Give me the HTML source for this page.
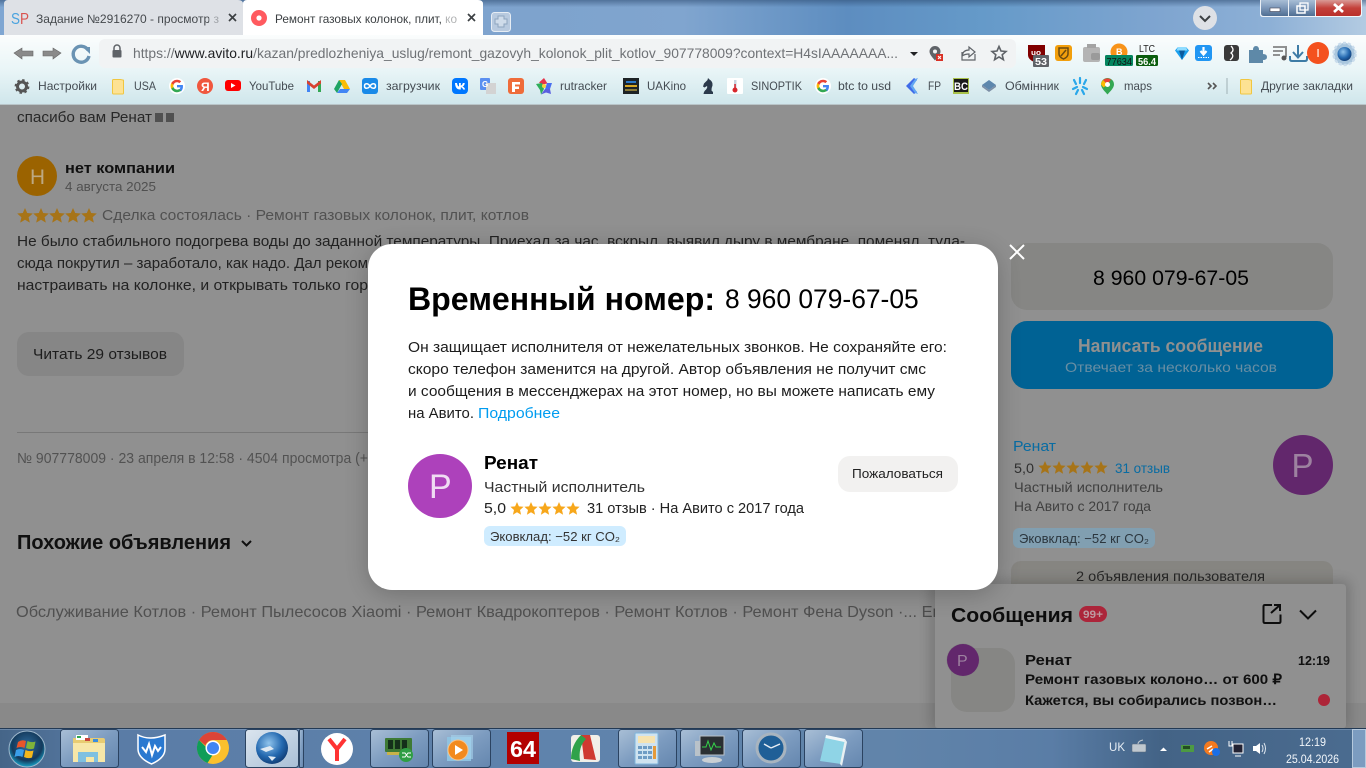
<!DOCTYPE html>
<html lang="ru"><head><meta charset="utf-8"><title>Ремонт газовых колонок</title>
<style>
html,body{margin:0;padding:0;width:1366px;height:768px;overflow:hidden;background:#999}
svg{display:block;position:absolute;left:0;top:0}
text{font-family:"Liberation Sans","Noto Sans CJK SC",sans-serif;white-space:pre}
.b{font-weight:700}
</style></head><body>
<svg width="1366" height="768" viewBox="0 0 1366 768" xmlns="http://www.w3.org/2000/svg">
<defs>
<linearGradient id="tb" x1="0" x2="1" y1="0" y2="0"><stop offset="0" stop-color="#7fa6d2"/><stop offset=".4" stop-color="#7ea3cd"/><stop offset=".5" stop-color="#80a5cf"/><stop offset=".62" stop-color="#5d8dc0"/><stop offset=".72" stop-color="#659ac9"/><stop offset=".85" stop-color="#7fa5d0"/><stop offset=".93" stop-color="#8db0d6"/><stop offset="1" stop-color="#b3cbe2"/></linearGradient>
<linearGradient id="tbv" x1="0" x2="0" y1="0" y2="1"><stop offset="0" stop-color="#2c4a70" stop-opacity=".55"/><stop offset=".2" stop-color="#2c4a70" stop-opacity="0"/></linearGradient>
<linearGradient id="tool" x1="0" x2="0" y1="0" y2="1"><stop offset="0" stop-color="#fbfdfd"/><stop offset=".5" stop-color="#e9f5f7"/><stop offset="1" stop-color="#cfe6eb"/></linearGradient>
<linearGradient id="task" x1="0" x2="1" y1="0" y2="0"><stop offset="0" stop-color="#456588"/><stop offset=".08" stop-color="#5a7ca6"/><stop offset=".4" stop-color="#5f83ac"/><stop offset=".65" stop-color="#6184aa"/><stop offset=".77" stop-color="#5a7da6"/><stop offset=".85" stop-color="#436386"/><stop offset="1" stop-color="#4b6c90"/></linearGradient>
<linearGradient id="tbtn" x1="0" y1="0" x2="1" y2="1"><stop offset="0" stop-color="#a9bfd6"/><stop offset=".5" stop-color="#7d9cc0"/><stop offset="1" stop-color="#6486ae"/></linearGradient>
<linearGradient id="tbtna" x1="0" y1="0" x2="1" y2="1"><stop offset="0" stop-color="#dbe5ef"/><stop offset="1" stop-color="#a9bfd6"/></linearGradient>
<radialGradient id="orb" cx=".5" cy=".4" r=".6"><stop offset="0" stop-color="#2f6c9d"/><stop offset=".7" stop-color="#143a5c"/><stop offset="1" stop-color="#17a3c9"/></radialGradient>
<radialGradient id="glb" cx=".4" cy=".35" r=".7"><stop offset="0" stop-color="#8fc3ec"/><stop offset=".6" stop-color="#2469b0"/><stop offset="1" stop-color="#0f3a72"/></radialGradient>
<linearGradient id="close" x1="0" x2="0" y1="0" y2="1"><stop offset="0" stop-color="#d99a96"/><stop offset=".5" stop-color="#c4403a"/><stop offset="1" stop-color="#b9302c"/></linearGradient>
<linearGradient id="wbtn" x1="0" x2="0" y1="0" y2="1"><stop offset="0" stop-color="#a9bed6"/><stop offset=".5" stop-color="#7c97b8"/><stop offset="1" stop-color="#4f6e92"/></linearGradient>
<filter id="sh" x="-20%" y="-20%" width="140%" height="140%"><feGaussianBlur stdDeviation="12"/></filter>
<filter id="sh2" x="-20%" y="-20%" width="140%" height="140%"><feGaussianBlur stdDeviation="6"/></filter>
<path id="star" d="M7 0 L8.9 4.4 L13.6 4.8 L10 8 L11.1 12.7 L7 10.2 L2.9 12.7 L4 8 L.4 4.8 L5.1 4.4Z"/>
<path id="star2" d="M8 0 L10.2 5 L15.8 5.5 L11.6 9.2 L12.8 14.6 L8 11.8 L3.200 14.6 L4.400 9.2 L.2 5.500 L5.800 5Z"/>
<g id="goog"><circle cx="8" cy="8" r="8" fill="#fff"/><g transform="translate(8,8) scale(1.3) translate(-8,-8)"><path d="M12.6 8.2c0-.4 0-.7-.1-1H8v1.9h2.6c-.1.7-.5 1.2-1 1.6v1.3h1.6c1-.9 1.4-2.2 1.4-3.8z" fill="#4285f4"/><path d="M8 12.8c1.3 0 2.4-.4 3.2-1.2l-1.6-1.3c-.4.3-1 .5-1.600.5-1.300 0-2.300-.8-2.700-2H3.600v1.300c.8 1.600 2.500 2.700 4.400 2.700z" fill="#34a853"/><path d="M5.300 8.800c-.2-.6-.2-1.100 0-1.700V5.800H3.600c-.7 1.400-.7 2.900 0 4.300z" fill="#fbbc05"/><path d="M8 5.100c.7 0 1.300.2 1.800.7l1.400-1.400C10.400 3.600 9.300 3.200 8 3.200c-1.900 0-3.600 1.100-4.400 2.600l1.700 1.300c.4-1.200 1.400-2 2.700-2z" fill="#ea4335"/></g></g>
<path id="fold" d="M.5 1.5q0-1 1-1h7l3 .6v13q0 .9-1 .9h-9q-1 0-1-1z" fill="#fde293" stroke="#f0c640"/>
</defs>

<!-- page -->
<rect width="1366" height="768" fill="#999"/>
<rect y="703" width="1366" height="25" fill="#929292"/>

<!-- titlebar -->
<rect width="1366" height="36" fill="url(#tb)"/>
<rect width="1366" height="36" fill="url(#tbv)"/>
<path d="M0 35 L4 35 L4 4 Q4 0 8 0 L238 0 Q243 0 243 4 L243 35 Z" fill="#dee1e6"/>
<path d="M243 35 L243 4 Q243 0 247 0 L478 0 Q483 0 483 4 L483 35Z" fill="#fff"/>
<text x="11" y="24" font-size="16" fill="#4aa3df" textLength="9" lengthAdjust="spacingAndGlyphs">S</text>
<text x="20" y="24" font-size="16" fill="#d9534f" textLength="9" lengthAdjust="spacingAndGlyphs">P</text>
<text x="36" y="23" font-size="12" fill="#45494d" textLength="183" lengthAdjust="spacingAndGlyphs">Задание №2916270 - просмотр з</text>
<rect x="209" y="8" width="14" height="22" fill="#dee1e6" opacity=".6"/>
<path d="M229 14l7 7m0-7l-7 7" stroke="#3c4043" stroke-width="1.7"/>
<circle cx="259" cy="18" r="8" fill="#ff5a5f"/><circle cx="259" cy="18" r="2.6" fill="#fff"/>
<text x="275" y="23" font-size="12" fill="#3c4043" textLength="182" lengthAdjust="spacingAndGlyphs">Ремонт газовых колонок, плит, ко</text>
<rect x="444" y="8" width="16" height="22" fill="#fff" opacity=".6"/>
<path d="M468 14l7 7m0-7l-7 7" stroke="#3c4043" stroke-width="1.7"/>
<rect x="491.500" y="12.500" width="19" height="19" rx="3" fill="#b8cadf" stroke="#e6edf4"/>
<path d="M498 16h6v3h3v5h-3v3h-6v-3h-3v-5h3z" fill="#cfdcea" stroke="#8ea5bf"/>
<!-- chevron pill -->
<circle cx="1205" cy="18" r="12" fill="#dee1e6"/>
<path d="M1200 16l5 5 5-5" fill="none" stroke="#3c4043" stroke-width="2"/>
<!-- window controls -->
<path d="M1260 0 V14 Q1260 17 1263 17 H1359 Q1362 17 1362 14 V0Z" fill="#fff" opacity=".85"/>
<path d="M1261 0 H1288 V16 H1264 Q1261 16 1261 13Z" fill="url(#wbtn)"/>
<rect x="1289" y="0" width="26" height="16" fill="url(#wbtn)"/>
<path d="M1316 0 H1361 V13 Q1361 16 1358 16 H1316Z" fill="url(#close)"/>
<rect x="1270" y="8" width="10" height="3.500" fill="#fff" stroke="#445" stroke-width=".6"/>
<rect x="1297" y="6" width="8" height="7" fill="none" stroke="#fff" stroke-width="1.5"/>
<rect x="1300" y="3" width="8" height="7" fill="none" stroke="#fff" stroke-width="1.300"/>
<path d="M1334 4l9 8m0-8l-9 8" stroke="#fff" stroke-width="2.800"/>

<!-- toolbar -->
<rect y="35" width="1366" height="70" fill="url(#tool)"/>
<rect x="99" y="39" width="917" height="29" rx="6" fill="#f1f3f4"/>
<rect y="104" width="1366" height="1" fill="#b9c5c8"/>
<path d="M14 53l8-5v3h11v5H22v3z" fill="#8a8a8a" stroke="#666" stroke-width=".6"/>
<path d="M61 53l-8-5v3H43v5h10v3z" fill="#8a8a8a" stroke="#666" stroke-width=".6"/>
<path d="M88 50a8 8 0 1 0 1 6" fill="none" stroke="#6a93b3" stroke-width="3.400"/><path d="M83 47h7v7z" fill="#6a93b3"/>
<path d="M114 50v-2a3 3 0 0 1 6 0v2" fill="none" stroke="#5f6368" stroke-width="1.500"/><rect x="112.500" y="50" width="9" height="7.500" rx="1" fill="#5f6368"/>
<text x="133" y="58" font-size="14" fill="#6f7276" textLength="765" lengthAdjust="spacingAndGlyphs">https://<tspan fill="#202124">www.avito.ru</tspan>/kazan/predlozheniya_uslug/remont_gazovyh_kolonok_plit_kotlov_907778009?context=H4sIAAAAAAA...</text>
<path d="M910 52h8l-4 4z" fill="#202124"/>
<path d="M935 46a5.500 5.500 0 0 1 5.500 5.500c0 3-3 6-5.500 9-2.500-3-5.500-6-5.500-9a5.500 5.500 0 0 1 5.500-5.500z" fill="#5f6368"/><circle cx="935" cy="51.500" r="2" fill="#f1f3f4"/><rect x="936" y="54" width="7" height="7" fill="#d93025"/><path d="M938 56l3 3m0-3l-3 3" stroke="#fff"/>
<path d="M962 52v8h13v-6M962 56q1-6 7-6v-3l6 5-6 5v-3q-4 0-7 2" fill="none" stroke="#5f6368" stroke-width="1.200"/>
<path d="M999 46.500l2 4.500 5 .5-3.800 3.300 1.200 4.900-4.400-2.700-4.400 2.700 1.200-4.900-3.800-3.300 5-.5z" fill="none" stroke="#5f6368" stroke-width="1.600"/>
<!-- extensions -->
<path d="M1028 45h17v10q0 5-8.500 8-8.500-3-8.500-8z" fill="#800000"/><text x="1031" y="55" font-size="7" fill="#fff" class="b" textLength="10" lengthAdjust="spacingAndGlyphs">uo</text>
<rect x="1033" y="55" width="16" height="12" rx="1" fill="#5f6368"/><text x="1035" y="65" font-size="10.500" fill="#fff" class="b" textLength="12" lengthAdjust="spacingAndGlyphs">53</text>
<rect x="1055" y="45" width="17" height="16" rx="3" fill="#f29f0c"/><path d="M1059 48h9v6q0 3-4.500 5-4.500-2-4.500-5z" fill="none" stroke="#6b4a10" stroke-width="1.500"/><path d="M1061 56l5-6" stroke="#6b4a10" stroke-width="1.500"/>
<rect x="1083" y="47" width="17" height="15" rx="2" fill="#b4b4b4"/><rect x="1087" y="44" width="9" height="4" fill="#a3a3a3"/><rect x="1091" y="53" width="9" height="7" rx="2" fill="#9a9a9a"/>
<circle cx="1119" cy="52" r="8.500" fill="#f7931a"/><text x="1116" y="55" font-size="9" fill="#fff" class="b">B</text>
<rect x="1105" y="55" width="28" height="11" rx="1.500" fill="#04855f"/><text x="1106.500" y="65" font-size="10.500" fill="#111" textLength="25.500" lengthAdjust="spacingAndGlyphs">77634</text>
<text x="1139" y="52" font-size="10" fill="#222" textLength="16" lengthAdjust="spacingAndGlyphs">LTC</text>
<rect x="1136" y="55" width="22" height="11" rx="1.500" fill="#0b5d0e"/><text x="1138" y="65" font-size="10.500" fill="#fff" class="b" textLength="18" lengthAdjust="spacingAndGlyphs">56.4</text>
<path d="M1178 47h8l3 3.500-7 9.500-7-9.500z" fill="#1aa0ee"/><path d="M1179 50.500l3 9.500 3-9.500z" fill="#0a5a9e"/><path d="M1178 47h8l1.500 3.500h-11z" fill="#8fdcff"/>
<rect x="1195" y="45" width="17" height="16" rx="3" fill="#2196f3"/><path d="M1203.500 47v7m-3-3l3 3.500 3-3.500" fill="none" stroke="#fff" stroke-width="2.200"/><path d="M1198 57.500h11" stroke="#fff" stroke-dasharray="1.500 1"/>
<rect x="1224" y="45" width="15" height="16" rx="3" fill="#3a3a3a"/><path d="M1231 46q4 4 0 7 4 3-1 7" fill="none" stroke="#fff" stroke-width="1.300"/>
<path d="M1249 50h4q0-4 3-4t3 4h4v4q4 0 4 3t-4 3v3h-14z" fill="#5e89a8"/>
<path d="M1273 47h12m-12 4h10m-10 4h7" stroke="#555" stroke-width="1.300"/><path d="M1286 46v11" stroke="#555" stroke-width="1.300"/><circle cx="1284" cy="58" r="2.500" fill="#555"/>
<path d="M1298 45v12m-5-5l5 5.500 5-5.500" fill="none" stroke="#3e7ca6" stroke-width="2"/><path d="M1290 56v3q0 2 2 2h13q2 0 2-2v-3" fill="none" stroke="#3e7ca6" stroke-width="2"/>
<circle cx="1318" cy="53" r="11" fill="#f4511e"/><rect x="1317.300" y="49" width="1.500" height="8" fill="#ffd8c8"/>
<circle cx="1344.500" cy="54" r="11" fill="#a9c6dd"/><circle cx="1344.500" cy="54" r="11" fill="none" stroke="#c9dcec" stroke-width="2.500" stroke-dasharray="3 2"/><circle cx="1344.500" cy="54" r="7" fill="url(#glb)"/>

<!-- bookmarks -->
<g fill="#444b52" font-size="12">
<text x="38" y="90" textLength="59" lengthAdjust="spacingAndGlyphs">Настройки</text>
<text x="134" y="90" textLength="22" lengthAdjust="spacingAndGlyphs">USA</text>
<text x="249" y="90" textLength="45" lengthAdjust="spacingAndGlyphs">YouTube</text>
<text x="386" y="90" textLength="54" lengthAdjust="spacingAndGlyphs">загрузчик</text>
<text x="560" y="90" textLength="47" lengthAdjust="spacingAndGlyphs">rutracker</text>
<text x="647" y="90" textLength="39" lengthAdjust="spacingAndGlyphs">UAKino</text>
<text x="751" y="90" textLength="51" lengthAdjust="spacingAndGlyphs">SINOPTIK</text>
<text x="838" y="90" textLength="53" lengthAdjust="spacingAndGlyphs">btc to usd</text>
<text x="928" y="90" textLength="13" lengthAdjust="spacingAndGlyphs">FP</text>
<text x="1005" y="90" textLength="54" lengthAdjust="spacingAndGlyphs">Обмінник</text>
<text x="1124" y="90" textLength="28" lengthAdjust="spacingAndGlyphs">maps</text>
<text x="1261" y="90" textLength="92" lengthAdjust="spacingAndGlyphs">Другие закладки</text>
</g>
<circle cx="22" cy="86.500" r="4.500" fill="none" stroke="#555" stroke-width="3"/><circle cx="22" cy="86.500" r="6.500" fill="none" stroke="#555" stroke-width="1.800" stroke-dasharray="2.500 2.600"/>
<use href="#fold" x="112" y="79"/>
<use href="#goog" x="169" y="78"/>
<circle cx="205" cy="86" r="8" fill="#f0573e"/><text x="201" y="91" font-size="12" fill="#fff" class="b">Я</text>
<rect x="225" y="80" width="16" height="11" rx="3" fill="#f00"/><path d="M231 83l4.500 2.500-4.500 2.500z" fill="#fff"/>
<rect x="307" y="81" width="3" height="11" fill="#4285f4"/><rect x="318" y="81" width="3" height="11" fill="#34a853"/><path d="M307 80l7 5.500 7-5.500v3.500l-7 5.500-7-5.500z" fill="#d8412f"/>
<path d="M339 80h6l5 9h-6z" fill="#fbbc04"/><path d="M339 80l-5 9 3 4 5-9z" fill="#1fa463"/><path d="M337 93h10l3-4h-10z" fill="#4285f4"/>
<rect x="362" y="78" width="16" height="16" rx="3" fill="#1a8ae8"/><path d="M370 86c-2-3-5.500-3-5.500 0s3.500 3 5.500 0 5.500-3 5.500 0-3.500 3-5.500 0z" fill="none" stroke="#fff" stroke-width="1.500"/>
<rect x="452" y="78" width="16" height="16" rx="4" fill="#0077ff"/><path d="M455 83h2q.4 3 2 3.500V83h1.800v2.500q1.500-.3 2-2.500h2q-.5 3-2.300 3.500 2 .7 2.700 3h-2.100q-.6-2-2.300-2.300v2.300H460q-4.700 0-5-6.500z" fill="#fff"/>
<rect x="480" y="78" width="10" height="12" rx="1" fill="#5a8ff0"/><rect x="486" y="83" width="10" height="11" fill="#d3d3d3"/><text x="482" y="87" font-size="8" fill="#fff" class="b">G</text>
<rect x="508" y="78" width="16" height="16" rx="3" fill="#ef6c3a"/><path d="M512 82h8v2.500h-5v2h4v2.500h-4v3h-3z" fill="#fff"/>
<path d="M544 78l3.500 5.500-5.500 1-3-2z" fill="#e5344b"/><path d="M552 83l-2 6-5 .5 2-6.500z" fill="#4a6ff0"/><path d="M536 84l6-1 2 6-3 5.500-1-4.500z" fill="#2fae5a"/><path d="M545 89l5 0 1 5-5-1.500-5 2z" fill="#5b5fe0"/><circle cx="544" cy="86" r="2" fill="#f6d33c"/>
<rect x="623" y="78" width="16" height="16" fill="#1e2326"/><rect x="626" y="81" width="10" height="2" fill="#2b78c9"/><rect x="625" y="85" width="12" height="2" fill="#d8a824"/><rect x="625" y="89" width="12" height="2" fill="#8a7a3a"/>
<path d="M703.500 94h9.500v-2l-1.500-1.500q0-3 1-5 .5-4-3-6l-1.500-1.500-.5 2-3.500 3.500-1 3 1.500 1 2.500-1.500q1 2-2 4.500l-1 1.500z" fill="#2c3a4c"/>
<rect x="727" y="78" width="16" height="16" rx="1" fill="#fff"/><rect x="734" y="80" width="2.500" height="9" fill="#c9d5e0"/><circle cx="735" cy="90" r="2.500" fill="#d8262c"/><rect x="734.300" y="84" width="1.500" height="5" fill="#d8262c"/>
<use href="#goog" x="815" y="78"/>
<path d="M914 78l-8 8 8 8 3-2-5-6 5-6z" fill="#3f6be8"/><path d="M918 78l-5 8 5 8-3-1-5-7 5-7z" fill="#62a6f2"/>
<rect x="953" y="78" width="16" height="16" fill="#a8c14a"/><rect x="954" y="79" width="14" height="13" fill="#1a1a1a"/><text x="954" y="90" font-size="11" fill="#fff" class="b" textLength="14" lengthAdjust="spacingAndGlyphs">BC</text>
<path d="M989 80l7 5-7 5-7-5z" fill="#5e87ad"/><path d="M982 85v2l7 5 7-5v-2l-7 5z" fill="#7c8ea5"/>
<g stroke="#2aa7ea" stroke-width="2.200" stroke-linecap="round"><path d="M1080 78v5M1074 80l2 4M1086 80l-2 4M1073 89l4-2M1087 89l-4-2M1076 94l2-4M1084 94l-2-4"/></g>
<path d="M1107.500 78a6.500 6.500 0 0 1 6.500 6.500c0 3.500-4 7-6.500 10-2.500-3-6.500-6.500-6.500-10a6.500 6.500 0 0 1 6.500-6.500z" fill="#34a853"/><path d="M1103 80a6.500 6.500 0 0 1 8-.5l-3.500 5z" fill="#ea4335"/><path d="M1101 84.500q0-2 2-4.500l4.500 4.500-4 3z" fill="#fbbc04"/><circle cx="1107.500" cy="84.500" r="2.500" fill="#fff"/>
<path d="M1208 83l3 3-3 3M1213 83l3 3-3 3" fill="none" stroke="#555" stroke-width="1.600"/>
<rect x="1226.500" y="78" width="1" height="16" fill="#9fb0b4"/>
<use href="#fold" x="1240" y="79"/>

<!-- content left -->
<text x="17" y="122" font-size="15" fill="#2b2b2b" textLength="135" lengthAdjust="spacingAndGlyphs">спасибо вам Ренат</text>
<rect x="155" y="113" width="8" height="9" fill="#555"/><rect x="166" y="113" width="8" height="9" fill="#555"/>
<circle cx="37" cy="176" r="20" fill="#a56a00"/>
<text x="30" y="184" font-size="21" fill="#c9b48c" textLength="15" lengthAdjust="spacingAndGlyphs">Н</text>
<text x="65" y="173" font-size="15" class="b" fill="#111" textLength="110" lengthAdjust="spacingAndGlyphs">нет компании</text>
<text x="65" y="191" font-size="13" fill="#565656" textLength="91" lengthAdjust="spacingAndGlyphs">4 августа 2025</text>
<g fill="#b27c1a"><use href="#star2" x="17" y="208"/><use href="#star2" x="33" y="208"/><use href="#star2" x="49" y="208"/><use href="#star2" x="65" y="208"/><use href="#star2" x="81" y="208"/></g>
<text x="102" y="220" font-size="15" fill="#575757" textLength="427" lengthAdjust="spacingAndGlyphs">Сделка состоялась · Ремонт газовых колонок, плит, котлов</text>
<g font-size="15" fill="#252525">
<text x="17" y="246" textLength="948" lengthAdjust="spacingAndGlyphs">Не было стабильного подогрева воды до заданной температуры. Приехал за час, вскрыл, выявил дыру в мембране, поменял, туда-</text>
<text x="17" y="268" textLength="351" lengthAdjust="spacingAndGlyphs">сюда покрутил – заработало, как надо. Дал реком</text>
<text x="17" y="290" textLength="351" lengthAdjust="spacingAndGlyphs">настраивать на колонке, и открывать только гор</text>
</g>
<rect x="17" y="332" width="167" height="44" rx="12" fill="#8f8f8f"/>
<text x="33" y="359" font-size="15" fill="#1f1f1f" textLength="134" lengthAdjust="spacingAndGlyphs">Читать 29 отзывов</text>
<rect x="17" y="432" width="351" height="1" fill="#808080"/>
<text x="17" y="463" font-size="14.500" fill="#585858" textLength="351" lengthAdjust="spacingAndGlyphs">№ 907778009 · 23 апреля в 12:58 · 4504 просмотра (+</text>
<text x="17" y="549" font-size="20" class="b" fill="#111" textLength="214" lengthAdjust="spacingAndGlyphs">Похожие объявления</text>
<path d="M242 541l4.500 4.500 4.500-4.500" fill="none" stroke="#111" stroke-width="2"/>
<text x="16" y="617" font-size="16" fill="#555" textLength="939" lengthAdjust="spacingAndGlyphs">Обслуживание Котлов · Ремонт Пылесосов Xiaomi · Ремонт Квадрокоптеров · Ремонт Котлов · Ремонт Фена Dyson ·... Ещё</text>

<!-- right column -->
<rect x="1011" y="243" width="322" height="67" rx="16" fill="#8f8f8d"/>
<text x="1093" y="285" font-size="21.250" fill="#000">8 960 079-67-05</text>
<rect x="1011" y="321" width="322" height="68" rx="16" fill="#00699e"/>
<text x="1078" y="352" font-size="18" fill="#9a9a9a" class="b" textLength="185" lengthAdjust="spacingAndGlyphs">Написать сообщение</text>
<text x="1065" y="372" font-size="14" fill="#6f97ae" textLength="212" lengthAdjust="spacingAndGlyphs">Отвечает за несколько часов</text>
<text x="1013" y="451" font-size="15" fill="#0a73ad" textLength="43" lengthAdjust="spacingAndGlyphs">Ренат</text>
<text x="1014" y="473" font-size="14" fill="#333" textLength="20" lengthAdjust="spacingAndGlyphs">5,0</text>
<g fill="#b27c1a"><use href="#star" x="1038" y="461"/><use href="#star" x="1052" y="461"/><use href="#star" x="1066" y="461"/><use href="#star" x="1080" y="461"/><use href="#star" x="1094" y="461"/></g>
<text x="1115" y="473" font-size="14" fill="#0a73ad" textLength="55" lengthAdjust="spacingAndGlyphs">31 отзыв</text>
<text x="1014" y="492" font-size="14" fill="#444" textLength="149" lengthAdjust="spacingAndGlyphs">Частный исполнитель</text>
<text x="1014" y="511" font-size="14" fill="#444" textLength="137" lengthAdjust="spacingAndGlyphs">На Авито с 2017 года</text>
<rect x="1013" y="528" width="142" height="20" rx="6" fill="#8aa9bd"/>
<text x="1019" y="543" font-size="13" fill="#2e3a42" textLength="130" lengthAdjust="spacingAndGlyphs">Эковклад: −52 кг CO₂</text>
<circle cx="1303" cy="465" r="30" fill="#692a73"/>
<text x="1291.500" y="477" font-size="33" fill="#a78bab">P</text>
<rect x="1011" y="561" width="322" height="40" rx="10" fill="#8f8e8a"/>
<text x="1076" y="581" font-size="14" fill="#2a2a2a" textLength="189" lengthAdjust="spacingAndGlyphs">2 объявления пользователя</text>

<!-- messenger -->
<rect x="930" y="580" width="420" height="150" rx="6" fill="#000" opacity=".16" filter="url(#sh2)"/>
<path d="M935 588q0-4 4-4H1342q4 0 4 4V725q0 3-3 3H938q-3 0-3-3z" fill="#999"/>
<text x="951" y="622" font-size="20" class="b" fill="#0e0e0e" textLength="122" lengthAdjust="spacingAndGlyphs">Сообщения</text>
<rect x="1079" y="606" width="28" height="16" rx="8" fill="#b7283e"/>
<text x="1083" y="618" font-size="11" class="b" fill="#c9a3aa" textLength="20" lengthAdjust="spacingAndGlyphs">99+</text>
<path d="M1272 605h-7q-1.500 0-1.500 1.500v15q0 1.500 1.500 1.500h14q1.500 0 1.500-1.500v-7M1271 613l9-8M1274 605h6v6" fill="none" stroke="#0e0e0e" stroke-width="2"/>
<path d="M1300 610.500l8 8 8-8" fill="none" stroke="#0e0e0e" stroke-width="2"/>
<rect x="951" y="648" width="64" height="64" rx="16" fill="#8f8f8d"/>
<circle cx="963" cy="660" r="16.500" fill="#8a8a8a"/><circle cx="963" cy="660" r="16" fill="#692a73"/>
<text x="957" y="666" font-size="16" fill="#a78bab">P</text>
<text x="1025" y="665" font-size="15" fill="#111" class="b" textLength="47" lengthAdjust="spacingAndGlyphs">Ренат</text>
<text x="1298" y="665" font-size="13" fill="#111" class="b" textLength="32" lengthAdjust="spacingAndGlyphs">12:19</text>
<text x="1025" y="684" font-size="14" fill="#111" class="b" textLength="257" lengthAdjust="spacingAndGlyphs">Ремонт газовых колоно… от 600 ₽</text>
<text x="1025" y="705" font-size="14" fill="#111" class="b" textLength="252" lengthAdjust="spacingAndGlyphs">Кажется, вы собирались позвон…</text>
<circle cx="1324" cy="700" r="6" fill="#b8283c"/>

<!-- slight extra dim over page -->
<rect y="105" width="1366" height="623" fill="#000" opacity=".06"/>

<!-- modal -->
<rect x="368" y="248" width="630" height="346" rx="26" fill="#000" opacity=".22" filter="url(#sh)"/>
<rect x="368" y="244" width="630" height="346" rx="24" fill="#fff"/>
<path d="M1010 245l14 14m0-14l-14 14" stroke="#fff" stroke-width="2"/>
<text x="408" y="310" font-size="32" class="b" fill="#000" textLength="307" lengthAdjust="spacingAndGlyphs">Временный номер:</text>
<text x="725" y="308" font-size="26.400" fill="#000">8 960 079-67-05</text>
<g font-size="15" fill="#1c1c1c">
<text x="408" y="352" textLength="539" lengthAdjust="spacingAndGlyphs">Он защищает исполнителя от нежелательных звонков. Не сохраняйте его:</text>
<text x="408" y="374" textLength="518" lengthAdjust="spacingAndGlyphs">скоро телефон заменится на другой. Автор объявления не получит смс</text>
<text x="408" y="396" textLength="527" lengthAdjust="spacingAndGlyphs">и сообщения в мессенджерах на этот номер, но вы можете написать ему</text>
<text x="408" y="418" textLength="66" lengthAdjust="spacingAndGlyphs">на Авито.</text>
<text x="478" y="418" fill="#009cf0" textLength="82" lengthAdjust="spacingAndGlyphs">Подробнее</text>
</g>
<circle cx="440" cy="486" r="32" fill="#ad41bb"/>
<text x="429" y="498" font-size="34" fill="#f0dcf3">P</text>
<text x="484" y="469" font-size="18" class="b" fill="#000" textLength="54" lengthAdjust="spacingAndGlyphs">Ренат</text>
<text x="484" y="492" font-size="15" fill="#333" textLength="161" lengthAdjust="spacingAndGlyphs">Частный исполнитель</text>
<text x="484" y="513" font-size="15" fill="#222" textLength="22" lengthAdjust="spacingAndGlyphs">5,0</text>
<g fill="#f7a71b"><use href="#star" x="510" y="502"/><use href="#star" x="524" y="502"/><use href="#star" x="538" y="502"/><use href="#star" x="552" y="502"/><use href="#star" x="566" y="502"/></g>
<text x="587" y="513" font-size="15" fill="#222" textLength="217" lengthAdjust="spacingAndGlyphs">31 отзыв · На Авито с 2017 года</text>
<rect x="484" y="526" width="142" height="20" rx="6" fill="#cfecff"/>
<text x="490" y="541" font-size="13" fill="#333" textLength="130" lengthAdjust="spacingAndGlyphs">Эковклад: −52 кг CO₂</text>
<rect x="838" y="456" width="120" height="36" rx="12" fill="#f2f1f0"/>
<text x="852" y="478" font-size="13" fill="#222" textLength="91" lengthAdjust="spacingAndGlyphs">Пожаловаться</text>

<!-- taskbar -->
<rect y="728" width="1366" height="40" fill="url(#task)"/>
<rect y="728" width="1366" height="1" fill="#233a55"/>
<rect y="729" width="1366" height="1" fill="#8ba6c4" opacity=".5"/>
<circle cx="27" cy="749" r="18" fill="url(#orb)" stroke="#9fb8cc" stroke-width="1"/>
<path d="M18 742q4-3 8-1l-1.500 7q-4-2-8 0z" fill="#e8552a"/><path d="M27.500 741q4 2 8 .5l-1.500 7q-4 1.500-8-.5z" fill="#7fb43a"/><path d="M16 750q4-2 8 0l-1.500 7q-4-2-8 0z" fill="#3a9ee8"/><path d="M25.500 750q4 2 8 .5l-1.500 7q-4 1.500-8-.5z" fill="#f4b81c"/>
<g stroke="#2b4361" fill="url(#tbtn)">
<rect x="60.500" y="729.500" width="58" height="38" rx="3"/>
<rect x="370.500" y="729.500" width="58" height="38" rx="3"/>
<rect x="432.500" y="729.500" width="58" height="38" rx="3"/>
<rect x="618.500" y="729.500" width="58" height="38" rx="3"/>
<rect x="680.500" y="729.500" width="58" height="38" rx="3"/>
<rect x="742.500" y="729.500" width="58" height="38" rx="3"/>
<rect x="804.500" y="729.500" width="58" height="38" rx="3"/>
<rect x="299.500" y="729.500" width="4" height="38" rx="1"/>
</g>
<rect x="245.500" y="729.500" width="53" height="38" rx="3" fill="url(#tbtna)" stroke="#2b4361"/>
<!-- explorer -->
<path d="M73 738h30q2 0 2 2v22H73z" fill="#e8cc72"/><rect x="76" y="735" width="12" height="5" fill="#fff"/><rect x="77" y="736" width="4" height="2" fill="#2fa84f"/><rect x="85" y="738" width="5" height="3" fill="#c9443b"/><rect x="93" y="739" width="5" height="3" fill="#3a8ee0"/>
<path d="M73 743h32v19H73z" fill="#f7e7a8"/><path d="M78 752h20v10h-4v-5H86v5h-8z" fill="#7fc0e0"/>
<!-- wise -->
<path d="M138 735q6 3 12 3h1q6 0 14-3v14q0 9-13.500 15Q138 758 138 749z" fill="#2a79d0" stroke="#fff" stroke-width="1.500"/><path d="M142 747l4 5 3-8 3 11 3-9 3 5 3-4" fill="none" stroke="#fff" stroke-width="2"/>
<!-- chrome -->
<circle cx="213" cy="748" r="16" fill="#fbc02d"/><path d="M213 732a16 16 0 0 1 13.900 8H213a8 8 0 0 0-7.600 5.500l-6.300-5.500A16 16 0 0 1 213 732z" fill="#db4437"/><path d="M199 740a16 16 0 0 0 8.500 23l6-9.500a8 8 0 0 1-8-7z" fill="#0f9d58"/><circle cx="213" cy="748" r="7.500" fill="#fff"/><circle cx="213" cy="748" r="6" fill="#4285f4"/>
<!-- globe -->
<circle cx="272" cy="748" r="16" fill="url(#glb)"/><path d="M260 749l10-3 4 3-8 3zM268 756l8 1-4 4z" fill="#dfe9f2"/>
<!-- yandex -->
<circle cx="337" cy="749" r="16" fill="#fff"/><path d="M329 739l8 10 8-10M337 749v12" fill="none" stroke="#f33" stroke-width="4"/>
<!-- ram -->
<rect x="385" y="738" width="27" height="14" rx="1" fill="#3e7a35"/><rect x="388" y="740" width="5" height="9" fill="#14301a"/><rect x="395" y="740" width="5" height="9" fill="#14301a"/><rect x="402" y="740" width="5" height="9" fill="#14301a"/><rect x="387" y="752" width="20" height="3" fill="#c9b24a"/><circle cx="406" cy="755" r="7" fill="#2f9e44"/><path d="M402 753l3 0 3 4 3 0M402 757l3 0 3-4 3 0" stroke="#fff" fill="none"/>
<!-- player -->
<rect x="447" y="737" width="24" height="24" fill="#8fc2e0"/><rect x="451" y="735" width="22" height="24" fill="#a6d4ec" opacity=".6"/><circle cx="458" cy="750" r="10" fill="#f28a1e" stroke="#f8c38a"/><path d="M455 745l8 5-8 5z" fill="#fff"/>
<!-- 64 -->
<rect x="507" y="732" width="32" height="32" fill="#b30000"/><text x="510" y="757" font-size="23" class="b" fill="#fff" textLength="26" lengthAdjust="spacingAndGlyphs">64</text>
<!-- faststone -->
<rect x="571" y="735" width="29" height="27" rx="3" fill="#f1efe8"/><path d="M581 735l9 0 6 25-12-1z" fill="#cf3a30"/><path d="M581 735q-10 10-10 24l9 2q-2-14 6-22z" fill="#2fa24a"/>
<!-- calc -->
<rect x="635" y="733" width="23" height="31" rx="1" fill="#cfe3f0" stroke="#7fb6dc"/><rect x="638" y="736" width="17" height="7" fill="#f6e3b0"/><g fill="#6e9cc4"><rect x="638" y="746" width="4" height="3"/><rect x="643" y="746" width="4" height="3"/><rect x="648" y="746" width="4" height="3"/><rect x="638" y="751" width="4" height="3"/><rect x="643" y="751" width="4" height="3"/><rect x="648" y="751" width="4" height="3"/><rect x="638" y="756" width="4" height="3"/><rect x="643" y="756" width="4" height="3"/><rect x="648" y="756" width="4" height="3"/></g><rect x="653" y="746" width="3" height="13" fill="#e59a3a"/>
<!-- monitor -->
<rect x="700" y="736" width="24" height="19" fill="#2a2f33" stroke="#b9c2c9"/><path d="M702 747l4 0 2-6 3 9 3-7 2 4 5 0" stroke="#35d14a" fill="none"/><rect x="695" y="741" width="5" height="15" fill="#b9c2c9"/><ellipse cx="712" cy="760" rx="10" ry="3" fill="#c9cfd4"/>
<!-- clock -->
<circle cx="771" cy="748" r="14" fill="#1f5f97" stroke="#a8b4bf" stroke-width="3"/><path d="M771 748l-7-4M771 748l9-4" stroke="#e8eef4" stroke-width="1.500"/>
<!-- notepad -->
<path d="M820 761l6-26 19 4-4 25z" fill="#8fd4e6"/><path d="M826 735l19 4-.6 3-19-4z" fill="#f2f6f8"/><path d="M845 739l2 3-5 24-2-2z" fill="#e8f0f2"/>
<!-- tray -->
<text x="1109" y="751" font-size="12" fill="#e6edf4" textLength="16" lengthAdjust="spacingAndGlyphs">UK</text>
<rect x="1132" y="744" width="14" height="8" rx="1" fill="#c0c8cf" stroke="#5a6a7a" stroke-width=".5"/><path d="M1138 744q0-3 5-4" fill="none" stroke="#c0c8cf"/>
<path d="M1160 751l3.500-3.500 3.500 3.500z" fill="#fff"/>
<rect x="1181" y="745" width="13" height="7" fill="#4d9a43"/><rect x="1183" y="746" width="7" height="3" fill="#234d22"/>
<circle cx="1211" cy="748" r="7" fill="#f47a1f"/><path d="M1207 749l5-3M1209 752l4-3" stroke="#fff" stroke-width="1.500"/><circle cx="1216" cy="752" r="4" fill="#1a6fe8"/>
<rect x="1233" y="744" width="10" height="9" fill="#223" stroke="#fff"/><path d="M1232 741v5M1229 741v5h4" stroke="#fff" fill="none"/><path d="M1235 756h6" stroke="#fff"/>
<path d="M1253 746h3l4-3v11l-4-3h-3z" fill="#fff"/><path d="M1262 745q2 3.500 0 7M1264 743q3 5.500 0 11" fill="none" stroke="#dfe8f0"/>
<text x="1299" y="746" font-size="12" fill="#f2f6fa" textLength="27" lengthAdjust="spacingAndGlyphs">12:19</text>
<text x="1286" y="763" font-size="12" fill="#f2f6fa" textLength="53" lengthAdjust="spacingAndGlyphs">25.04.2026</text>
<rect x="1352.500" y="729.500" width="13" height="38" fill="#7c9cc0" stroke="#b5c9dd"/>
</svg>
</body></html>
